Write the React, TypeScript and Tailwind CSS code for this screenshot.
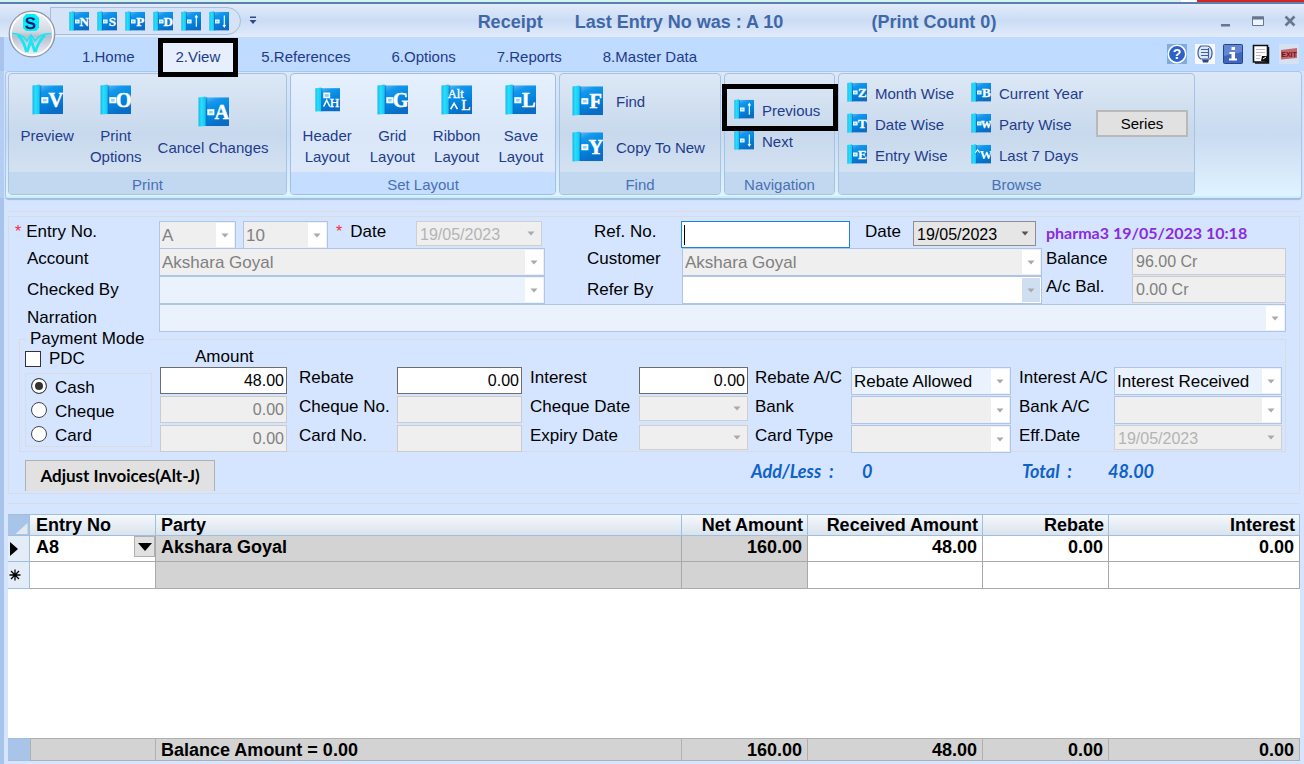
import React from "react";

const SANS = "font-['Liberation_Sans',Arial,sans-serif]";

function Book({ glyph, mark = "box", className }: { glyph?: string; mark?: "box" | "up" | "down" | "alt" | "header" | "caret"; className: string }) {
  return (
    <svg viewBox="0 0 32 32" className={`block shrink-0 ${className}`} aria-hidden="true">
      <defs>
        <linearGradient id="cover" x1="0" y1="0" x2="0.4" y2="1">
          <stop offset="0" stopColor="#5fbcf5" />
          <stop offset="0.25" stopColor="#1497ec" />
          <stop offset="0.65" stopColor="#0084e0" />
          <stop offset="1" stopColor="#0a6cc4" />
        </linearGradient>
        <linearGradient id="spine" x1="0" y1="0" x2="1" y2="0">
          <stop offset="0" stopColor="#1cb4ea" />
          <stop offset="0.4" stopColor="#25e0fb" />
          <stop offset="1" stopColor="#16c4f2" />
        </linearGradient>
      </defs>
      <rect x="7" y="1.5" width="25" height="29.5" fill="url(#cover)" />
      <path d="M0.5 1.5 L8 0.5 V31 L0.5 31.5 Z" fill="url(#spine)" />
      <path d="M8 1.5 h1.5 V31 H8 Z" fill="#0a6cc4" opacity=".6" />
      {(mark === "box" || mark === "up" || mark === "down") && (
        <rect x="10.5" y="14.5" width="5.5" height="4.500" fill="#8fd0fa" stroke="#fff" strokeWidth="1.8" />
      )}
      {mark === "box" && (
        <text x="24.5" y="23.500" textAnchor="middle" fontFamily="Liberation Serif, serif" fontWeight="bold" fontSize={glyph === "W" ? 17 : 21} fill="#fff" stroke="#fff" strokeWidth=".5">
          {glyph}
        </text>
      )}
      {mark === "up" && <path d="M24.5 25 V8 M22.5 10.500 L24.500 7.500 L26.500 10.500" stroke="#fff" strokeWidth="1.8" fill="none" />}
      {mark === "down" && <path d="M24.5 7 V25 M22.5 22.500 L24.500 25.500 L26.500 22.500" stroke="#fff" strokeWidth="1.8" fill="none" />}
      {mark === "alt" && (
        <g fontFamily="Liberation Serif, serif" fill="#fff" stroke="#fff" strokeWidth=".4">
          <text x="7" y="14" fontSize="13">Alt</text>
          <text x="21" y="27" fontSize="16">L</text>
          <path d="M10 26 L13.500 20 L17 26" strokeWidth="1.7" fill="none" />
        </g>
      )}
      {mark === "header" && (
        <g fontFamily="Liberation Serif, serif" fill="#fff">
          <rect x="11.500" y="8" width="7" height="5.500" fill="#8fd0fa" stroke="#fff" strokeWidth="1.8" />
          <text x="19" y="25" fontSize="17" stroke="#fff" strokeWidth=".5">H</text>
          <path d="M11 25 L15 17 L19 25" stroke="#fff" strokeWidth="1.9" fill="none" />
        </g>
      )}
      {mark === "caret" && (
        <g fontFamily="Liberation Serif, serif" fill="#fff">
          <path d="M7 14 L10.500 9 L14 14" stroke="#fff" strokeWidth="1.8" fill="none" />
          <text x="14" y="24" fontSize="20" fontWeight="bold">W</text>
        </g>
      )}
    </svg>
  );
}

function Group({ title, width, light, children }: { title: string; width: string; light?: boolean; children: React.ReactNode }) {
  const tone = light
    ? "from-[#e6f0fd] via-[#d9e7f9] to-[#dfeafa] border-[#9dbfe8]"
    : "from-[#dce8f5] via-[#c8d9ed] to-[#d9e7f5] border-[#a5c3e3]";
  return (
    <section className={`flex h-[122px] shrink-0 flex-col overflow-hidden rounded-[4px] border bg-linear-to-b ${tone} ${width}`}>
      <div className="flex-1">{children}</div>
      <h2 className={`h-[22px] pt-0.5 text-center text-[15px] leading-[22px] text-[#4a70b4] ${light ? "bg-[#c5deff]" : "bg-[#c1d8f0]"}`}>{title}</h2>
    </section>
  );
}

function BigButton({ icon, lines }: { icon: React.ReactNode; lines: string[] }) {
  return (
    <button className="flex flex-col items-center gap-2.5 leading-[21px]">
      <span className="flex h-[31px] items-center">{icon}</span>
      <span>
        {lines.map((l) => (
          <span key={l} className="block whitespace-nowrap">{l}</span>
        ))}
      </span>
    </button>
  );
}

function RowButton({ icon, label, gap = "gap-2" }: { icon: React.ReactNode; label: string; gap?: string }) {
  return (
    <button className={`flex items-center whitespace-nowrap leading-4 ${gap}`}>
      {icon}
      <span className="pt-[3px]">{label}</span>
    </button>
  );
}

function Arrow({ color = "#a9a9a9" }: { color?: string }) {
  return (
    <svg viewBox="0 0 8 5" className="h-[5px] w-2" aria-hidden="true">
      <path d="M0.500 0.500 H7.500 L4 4.500 Z" fill={color} />
    </svg>
  );
}

type Kind = "off" | "pale" | "white" | "date" | "dateOn";
const KIND: Record<Kind, { box: string; btn: string; text: string }> = {
  off: { box: "border-[#aec5e6] bg-[#efefef] h-7", btn: "bg-white", text: "text-[17px] text-[#808080] pl-0.5" },
  pale: { box: "border-[#aec5e6] bg-[#eaf2fd] h-7", btn: "bg-white", text: "text-[17px] text-black pl-0.5" },
  white: { box: "border-[#aec5e6] bg-white h-7", btn: "bg-[#cfdff0]", text: "text-[17px] text-black pl-0.5" },
  date: { box: "border-[#cfcfcf] bg-[#efefef] h-[25px]", btn: "", text: "text-[16px] text-[#b4b4b4] pl-[3px]" },
  dateOn: { box: "border-[#8e8e8e] bg-[#e6e6e6] h-[25px]", btn: "", text: "text-[16px] text-black pl-[3px]" },
};

function Combo({ id, value = "", kind, label, className = "" }: { id: string; value?: string; kind: Kind; label?: string; className?: string }) {
  const k = KIND[kind];
  return (
    <div className={`relative min-w-0 border ${k.box} ${className}`}>
      <select id={id} aria-label={label} defaultValue={value} className={`block h-full w-full appearance-none bg-transparent pt-px outline-none ${k.text}`}>
        <option value={value}>{value}</option>
      </select>
      <span className={`pointer-events-none absolute inset-y-px right-px flex w-[18px] items-center justify-center ${k.btn}`}>
        <Arrow color={kind === "dateOn" ? "#555" : "#a9a9a9"} />
      </span>
    </div>
  );
}

function Field({ id, value = "", on, right, label }: { id: string; value?: string; on?: boolean; right?: boolean; label?: string }) {
  return (
    <input
      id={id}
      aria-label={label}
      defaultValue={value}
      readOnly={!on}
      className={`block h-[27px] w-full min-w-0 border pt-px text-[16px] outline-none ${right ? "pr-0.5 text-right" : "px-[3px]"} ${
        on ? "border-[#6d6d6d] bg-white text-black" : "border-[#cbcbcb] bg-[#efefef] text-[#808080]"
      }`}
    />
  );
}

function Label({ htmlFor, children, className = "" }: { htmlFor: string; children: React.ReactNode; className?: string }) {
  return (
    <label htmlFor={htmlFor} className={`whitespace-nowrap text-[17px] leading-[22px] ${className}`}>
      {children}
    </label>
  );
}

function Orb() {
  return (
    <svg viewBox="0 0 48 48" className="absolute left-2 top-2.5 z-10 size-12" role="img" aria-label="Application menu">
      <defs>
        <linearGradient id="orb" x1="0" y1="0" x2="0" y2="1">
          <stop offset="0" stopColor="#f4f6fa" />
          <stop offset="0.45" stopColor="#d3d8e2" />
          <stop offset="0.55" stopColor="#b6becf" />
          <stop offset="1" stopColor="#f2f5fb" />
        </linearGradient>
      </defs>
      <circle cx="24" cy="24" r="22.800" fill="url(#orb)" stroke="#8d97a8" strokeWidth="1.200" />
      <circle cx="24" cy="24" r="21" fill="none" stroke="#fff" strokeWidth="1.500" />
      <path d="M18 4 h9 l4 4 v10 l-3 3 h-10 l-3 -3 v-10 Z" fill="#00f0fa" />
      <text x="22.500" y="19" textAnchor="middle" fontFamily="Liberation Sans, sans-serif" fontWeight="bold" fontSize="17" textRendering="geometricPrecision" fill="#0b1a78">S</text>
      <path d="M4 23.500 C11 23.500 16 26 19 31 L23 25 L27 31 C30 26 35 23.500 43 23.500" fill="none" stroke="#19e6f2" strokeWidth="1.600" />
      <path d="M10 25 C14 29 17 35 18.500 42 M19 42 L23 30 L27 42 M27.500 42 C29 35 33 29 37 25" fill="none" stroke="#19e6f2" strokeWidth="2.800" />
    </svg>
  );
}

function TopIcons() {
  return (
    <div className="flex items-center gap-2">
      <button aria-label="Help">
        <svg viewBox="0 0 20 20" className="block size-5">
          <rect width="20" height="20" fill="#7fabdf" />
          <circle cx="10" cy="10" r="8.700" fill="#2c62c8" stroke="#fff" strokeWidth="1.500" />
          <text x="10" y="15" textAnchor="middle" fontFamily="Liberation Sans, sans-serif" fontWeight="bold" fontSize="14" fill="#fff">?</text>
        </svg>
      </button>
      <button aria-label="Scroll">
        <svg viewBox="0 0 20 20" className="block size-5">
          <rect width="20" height="20" fill="#f7f9fd" />
          <path d="M6 2 H13 C18 4 18 12 15 15 H6 C2 13 2 5 6 2 Z" fill="#dde9fa" stroke="#3c5f9e" strokeWidth="1.200" />
          <path d="M6 5.500 h7 M6 8.500 h8 M6 11.500 h7 M13.500 4 v10" stroke="#3c5f9e" strokeWidth="1.200" />
          <path d="M7 15.500 h7 l-1 3 h-5 Z" fill="#2c4a86" />
        </svg>
      </button>
      <button aria-label="Information">
        <svg viewBox="0 0 20 20" className="block size-5">
          <rect x="0.500" y="0.500" width="19" height="19" rx="1" fill="#3f66bd" stroke="#27458c" />
          <path d="M1 1 H19 V8 L1 12 Z" fill="#7b9ce0" opacity=".6" />
          <path d="M8.500 3 h3.500 v3 h-3.500 Z M6.500 8 h5.500 v6.500 h2 v2 h-8 v-2 h2.500 v-4.500 h-2 Z" fill="#fff" />
        </svg>
      </button>
      <button aria-label="Notes">
        <svg viewBox="0 0 20 20" className="block size-5">
          <path d="M2.500 1.500 H16.500 V18 H2.500 Z" fill="#fff" stroke="#111" strokeWidth="1.600" />
          <path d="M17.500 3 V19 H4" fill="none" stroke="#111" strokeWidth="1.500" />
          <path d="M5 5.500 h9 M5 8.500 h9 M5 11.500 h5 M5 14.500 h4" stroke="#b9bcc4" strokeWidth="1.200" />
          <path d="M10 17 L11 12 H16 V18 Z" fill="#111" />
          <path d="M12 15 l3 -2" stroke="#fff" />
        </svg>
      </button>
      <button aria-label="Exit">
        <svg viewBox="0 0 20 20" className="block size-5">
          <rect width="20" height="20" fill="#d5e2f4" />
          <path d="M2 6 L18 4 V14 L2 15.500 Z" fill="#c4686c" />
          <text x="10" y="13" textAnchor="middle" fontFamily="Liberation Sans, sans-serif" fontWeight="bold" fontSize="7" fill="#6e1116">EXIT</text>
        </svg>
      </button>
    </div>
  );
}

const TABS = ["1.Home", "2.View", "5.References", "6.Options", "7.Reports", "8.Master Data"];

function Header() {
  return (
    <header className="relative">
      <div className="flex h-0.5 bg-[#d3f3ee]">
        <span className="ml-auto w-4 bg-white" />
        <span className="w-[107px] bg-[#d3241f]" />
      </div>
      <Orb />
      <div className="relative flex h-[35px] items-center border-t-2 border-[#5b7fae] bg-linear-to-b from-[#e2ebfa] via-[#cbdcf5] to-[#e2ecfb]">
        <div className="ml-[50px] flex h-7 w-[191px] items-center gap-2 rounded-r-full border border-[#a5bde0] bg-[#d6e3f6] pl-[18px]">
          <Book glyph="N" className="size-5" />
          <Book glyph="S" className="size-5" />
          <Book glyph="P" className="size-5" />
          <Book glyph="D" className="size-5" />
          <Book mark="up" className="size-5" />
          <Book mark="down" className="size-5" />
        </div>
        <svg viewBox="0 0 8 9" className="ml-2 h-[9px] w-2" aria-hidden="true">
          <path d="M1 0.500 h6 v1.500 h-6 Z M0.500 4 H7.500 L4 8 Z" fill="#2b4a86" />
        </svg>
        <h1 className="pointer-events-none absolute inset-x-0 flex justify-center gap-8 pl-[170px] pt-0.5 text-[18px] font-bold leading-5 text-[#3f68a8]">
          <span>Receipt</span>
          <span>Last Entry No was : A 10</span>
          <span className="pl-14">(Print Count 0)</span>
        </h1>
        <div className="ml-auto flex items-center gap-5 pr-2">
          <button aria-label="Minimize">
            <svg viewBox="0 0 12 12" className="block size-3"><path d="M1 9 h9 v2.500 h-9 Z" fill="#66778f" /></svg>
          </button>
          <button aria-label="Restore">
            <svg viewBox="0 0 12 12" className="block size-3"><path d="M0.500 2 h11 v8.500 h-11 Z" fill="#eef4fd" stroke="#66778f" /><path d="M0 1.500 h12 v3 h-12 Z" fill="#66778f" /></svg>
          </button>
          <button aria-label="Close">
            <svg viewBox="0 0 12 12" className="block size-3"><path d="M1.500 1.500 L10.500 10.500 M10.500 1.500 L1.500 10.500" stroke="#66778f" strokeWidth="2.600" /></svg>
          </button>
        </div>
      </div>
      <div className="flex h-[34px] items-center justify-between border-l-4 border-[#a9c4ec] bg-[#bfdbff] pl-[78px] pr-[5px] text-[15px] text-[#1f3c8c]">
        <nav className="flex h-full gap-[41px]">
          {TABS.map((t) => (
            <button key={t} className="relative whitespace-nowrap pt-1.5">
              {t === "2.View" && (
                <span className="absolute -inset-x-[18px] top-[1px] z-10 h-[39px] border-[5px] border-black bg-[#e6effb]" />
              )}
              <span className="relative z-20">{t}</span>
            </button>
          ))}
        </nav>
        <TopIcons />
      </div>
    </header>
  );
}

function Ribbon() {
  const big = "size-[31px]";
  return (
    <div className="border-l-4 border-[#b4cdf2] pl-px pr-0.5">
      <div className="flex h-[127px] gap-[3px] rounded-[4px] border border-b-2 border-[#a9c6ee] border-b-[#c8f0fa] bg-linear-to-b from-[#dce8f6] via-[#c9dbf0] to-[#e0f3ff] px-0.5 pt-px text-[15px] text-[#1f3c8c] shadow-[0_2px_1px_#a3bbdc]">
        <Group title="Print" width="w-[279px]">
          <div className="flex items-start justify-center gap-4 pr-1.5 pt-2.5">
            <BigButton icon={<Book glyph="V" className={big} />} lines={["Preview"]} />
            <BigButton icon={<Book glyph="O" className={big} />} lines={["Print", "Options"]} />
            <div className="pt-3">
              <BigButton icon={<Book glyph="A" className={big} />} lines={["Cancel Changes"]} />
            </div>
          </div>
        </Group>
        <Group title="Set Layout" width="w-[266px]" light>
          <div className="flex items-start justify-center gap-[18px] pt-2.5">
            <BigButton icon={<Book mark="header" className="size-[25px]" />} lines={["Header", "Layout"]} />
            <BigButton icon={<Book glyph="G" className={big} />} lines={["Grid", "Layout"]} />
            <BigButton icon={<Book mark="alt" className={big} />} lines={["Ribbon", "Layout"]} />
            <BigButton icon={<Book glyph="L" className={big} />} lines={["Save", "Layout"]} />
          </div>
        </Group>
        <Group title="Find" width="w-[162px]">
          <div className="flex flex-col items-start gap-[15px] pl-3 pt-[11px]">
            <RowButton gap="gap-[13px]" icon={<Book glyph="F" className={big} />} label="Find" />
            <RowButton gap="gap-[13px]" icon={<Book glyph="Y" className={big} />} label="Copy To New" />
          </div>
        </Group>
        <div className="relative shrink-0">
          <Group title="Navigation" width="w-[111px]">
            <div className="flex flex-col items-start gap-[11px] pl-[9px] pt-[25px]">
              <RowButton icon={<Book mark="up" className="size-5" />} label="Previous" />
              <RowButton icon={<Book mark="down" className="size-5" />} label="Next" />
            </div>
          </Group>
          <span className="pointer-events-none absolute -left-0.5 -right-[3px] top-[11px] z-10 h-[47px] border-[5px] border-black" />
        </div>
        <Group title="Browse" width="w-[357px]">
          <div className="flex pl-2 pt-2">
            <div className="flex w-[124px] flex-col items-start gap-[11px]">
              <RowButton icon={<Book glyph="Z" className="size-5" />} label="Month Wise" />
              <RowButton icon={<Book glyph="T" className="size-5" />} label="Date Wise" />
              <RowButton icon={<Book glyph="E" className="size-5" />} label="Entry Wise" />
            </div>
            <div className="flex w-[125px] flex-col items-start gap-[11px]">
              <RowButton icon={<Book glyph="B" className="size-5" />} label="Current Year" />
              <RowButton icon={<Book glyph="W" className="size-5" />} label="Party Wise" />
              <RowButton icon={<Book mark="caret" className="size-5" />} label="Last 7 Days" />
            </div>
            <button className="h-[27px] w-[92px] self-center border-2 border-[#b9b9b9] bg-[#e1e1e1] pt-0.5 leading-5 text-black">Series</button>
          </div>
        </Group>
      </div>
    </div>
  );
}

const star = <span className="text-[16px] text-red-500">*</span>;

function Details() {
  return (
    <div className="flex flex-col pl-1.5 pr-[13px]">
      <div className="grid h-[27px] grid-cols-[144fr_77fr_7fr_85fr_88fr_126fr_139fr_169fr_63fr_123fr_250fr]">
        <Label htmlFor="entry" className="flex gap-[5px]">{star}Entry No.</Label>
        <Combo id="entry" value="A" kind="off" />
        <span />
        <Combo id="entryNo" value="10" kind="off" label="Entry number" />
        <Label htmlFor="date" className="flex gap-2 pl-2">{star}Date</Label>
        <Combo id="date" value="19/05/2023" kind="date" />
        <Label htmlFor="ref" className="pl-[52px]">Ref. No.</Label>
        <div className="relative min-w-0">
          <input id="ref" className="block h-[27px] w-full border border-[#1c83d8] bg-white px-[3px] text-[17px] outline-none" />
          <span className="pointer-events-none absolute inset-y-1 left-[3px] w-px bg-black" />
        </div>
        <Label htmlFor="refDate" className="pl-[15px]">Date</Label>
        <Combo id="refDate" value="19/05/2023" kind="dateOn" />
        <strong className="whitespace-nowrap pl-2.5 font-['Lato',sans-serif] text-[16px] leading-6 text-[#8a2be2]">pharma3 19/05/2023 10:18</strong>
      </div>
      <div className="grid grid-cols-[144fr_386fr_137fr_360fr_90fr_154fr] grid-rows-[28px_28px]">
        <Label htmlFor="account" className="pl-3">Account</Label>
        <Combo id="account" value="Akshara Goyal" kind="off" />
        <Label htmlFor="customer" className="pl-[42px]">Customer</Label>
        <Combo id="customer" value="Akshara Goyal" kind="off" />
        <Label htmlFor="balance" className="pl-1">Balance</Label>
        <Field id="balance" value="96.00 Cr" />
        <Label htmlFor="checked" className="self-center pl-3">Checked By</Label>
        <Combo id="checked" kind="pale" />
        <Label htmlFor="refer" className="self-center pl-[42px]">Refer By</Label>
        <Combo id="refer" kind="white" />
        <Label htmlFor="acbal" className="pl-1">A/c Bal.</Label>
        <Field id="acbal" value="0.00 Cr" />
      </div>
      <div className="grid grid-cols-[144fr_1127fr]">
        <Label htmlFor="narration" className="self-center pl-3">Narration</Label>
        <Combo id="narration" kind="pale" />
      </div>
    </div>
  );
}

function Radio({ label, checked }: { label: string; checked?: boolean }) {
  return (
    <label className="flex h-6 items-center gap-2 pl-[5px] text-[17px] leading-4">
      <input
        type="radio"
        name="mode"
        defaultChecked={checked}
        className="size-4 appearance-none rounded-full border border-[#444] bg-white checked:bg-[#333] checked:shadow-[inset_0_0_0_3px_#fff]"
      />
      <span className="pt-[3px]">{label}</span>
    </label>
  );
}

function Payment() {
  return (
    <fieldset className="ml-2.5 mr-[13px] min-w-0 border border-[#d9dbe0]">
      <legend className="ml-1.5 px-1 text-[17px] leading-3.5">Payment Mode</legend>
      <div className="grid grid-cols-[140fr_127fr_110fr_125fr_117fr_109fr_103fr_160fr_103fr_168fr_3fr] grid-rows-[21px_29px_29px_26px]">
        <div className="row-span-4 pl-[5px] pr-2">
          <label className="mb-px flex h-[26px] items-center gap-2 text-[17px]">
            <input type="checkbox" className="size-4 appearance-none border border-[#333] bg-white checked:bg-[#333]" />
            PDC
          </label>
          <div className="border border-[#d9dbe0]">
            <Radio label="Cash" checked />
            <Radio label="Cheque" />
            <Radio label="Card" />
          </div>
        </div>
        <Label htmlFor="amount" className="col-span-10 pl-[35px] leading-3.5">Amount</Label>

        <Field id="amount" value="48.00" on right />
        <Label htmlFor="rebate" className="pl-3">Rebate</Label>
        <Field id="rebate" value="0.00" on right />
        <Label htmlFor="interest" className="pl-2">Interest</Label>
        <Field id="interest" value="0.00" on right />
        <Label htmlFor="rebateAc" className="pl-[7px]">Rebate A/C</Label>
        <Combo id="rebateAc" value="Rebate Allowed" kind="pale" />
        <Label htmlFor="interestAc" className="pl-2">Interest A/C</Label>
        <Combo id="interestAc" value="Interest Received" kind="pale" />
        <span />

        <Field id="chequeAmt" value="0.00" right label="Cheque amount" />
        <Label htmlFor="chequeNo" className="pl-3">Cheque No.</Label>
        <Field id="chequeNo" />
        <Label htmlFor="chequeDate" className="pl-2">Cheque Date</Label>
        <Combo id="chequeDate" kind="date" />
        <Label htmlFor="bank" className="pl-[7px]">Bank</Label>
        <Combo id="bank" kind="off" />
        <Label htmlFor="bankAc" className="pl-2">Bank A/C</Label>
        <Combo id="bankAc" kind="off" />
        <span />

        <Field id="cardAmt" value="0.00" right label="Card amount" />
        <Label htmlFor="cardNo" className="pl-3">Card No.</Label>
        <Field id="cardNo" />
        <Label htmlFor="expiry" className="pl-2">Expiry Date</Label>
        <Combo id="expiry" kind="date" />
        <Label htmlFor="cardType" className="pl-[7px]">Card Type</Label>
        <Combo id="cardType" kind="off" />
        <Label htmlFor="effDate" className="pl-2">Eff.Date</Label>
        <Combo id="effDate" value="19/05/2023" kind="date" />
        <span />
      </div>
    </fieldset>
  );
}

const COLS = ["Party", "Net Amount", "Received Amount", "Rebate", "Interest"];
const NUMS = ["160.00", "48.00", "0.00", "0.00"];

function Grid() {
  const line = "border-r border-b border-[#a9a9a9]";
  return (
    <table className="w-full table-fixed border-separate border-spacing-0 border-t border-[#9dbfe0] bg-white text-[18px] font-bold leading-5">
      <colgroup>
        <col className="w-[22px]" />
        <col className="w-[126px]" />
        <col />
        <col className="w-[126px]" />
        <col className="w-[175px]" />
        <col className="w-[126px]" />
        <col className="w-[191px]" />
      </colgroup>
      <thead>
        <tr className="h-[21px] bg-linear-to-b from-[#f6f9fc] to-[#d8e1ec]">
          <th className="border-b border-r border-[#9dbfe0] bg-[#a9c4e9]" aria-label="Row">
            <svg viewBox="0 0 20 20" className="block h-5 w-full" aria-hidden="true">
              <path d="M19 8 V19 H7 Z" fill="#e4e9f0" />
            </svg>
          </th>
          <th className="border-b border-r border-[#9dbfe0] pl-1.5 text-left">Entry No</th>
          {COLS.map((c, i) => (
            <th key={c} className={`border-b border-r border-[#9dbfe0] ${i === 0 ? "pl-[5px] text-left" : "pr-1 text-right"}`}>{c}</th>
          ))}
        </tr>
      </thead>
      <tbody>
        <tr className="h-[26px]">
          <td className="border-b border-r border-[#9dbfe0] bg-[#e4edf7]">
            <svg viewBox="0 0 8 14" className="ml-0.5 h-3.5 w-2" aria-hidden="true"><path d="M0 0 L8 7 L0 14 Z" fill="#000" /></svg>
          </td>
          <td className={`${line} pl-1.5 align-top`}>
            <div className="flex items-start justify-between">
              <span className="pt-px">A8</span>
              <button aria-label="Choose entry" className="flex h-[21px] w-[21px] items-center justify-center border border-[#b0b0b0] bg-[#e1e1e1]">
                <svg viewBox="0 0 14 8" className="h-2 w-3.5" aria-hidden="true"><path d="M0 0 H14 L7 8 Z" fill="#000" /></svg>
              </button>
            </div>
          </td>
          <td className={`${line} bg-[#d3d3d3] pl-[5px] pt-px align-top`}>Akshara Goyal</td>
          {NUMS.map((n, i) => (
            <td key={i} className={`${line} pr-[5px] pt-px text-right align-top ${i === 0 ? "bg-[#d3d3d3]" : ""}`}>{n}</td>
          ))}
        </tr>
        <tr className="h-[27px]">
          <td className="border-b border-r border-[#9dbfe0] bg-[#e4edf7]">
            <svg viewBox="0 0 12 12" className="ml-px size-3" aria-hidden="true"><path d="M6 0.500 V11.500 M0.500 6 H11.500 M2 2 L10 10 M10 2 L2 10" stroke="#000" strokeWidth="1.300" /></svg>
          </td>
          <td className={line} />
          <td className={`${line} bg-[#d3d3d3]`} />
          <td className={`${line} bg-[#d3d3d3]`} />
          <td className={line} />
          <td className={line} />
          <td className={line} />
        </tr>
        <tr className="h-[149px]">
          <td colSpan={7} />
        </tr>
      </tbody>
      <tfoot>
        <tr className="h-[23px] bg-[#d3d3d3]">
          <td className="border-y border-[#9dbfe0] bg-[#a9c4e9]" />
          <td className="border border-[#b0b0b0]" />
          <td className="border-y border-r border-[#b0b0b0] pl-[5px]">Balance Amount = 0.00</td>
          {NUMS.map((n, i) => (
            <td key={i} className="border-y border-r border-[#b0b0b0] pr-[5px] text-right">{n}</td>
          ))}
        </tr>
      </tfoot>
    </table>
  );
}

export default function App() {
  return (
    <div className={`flex min-h-screen flex-col overflow-x-hidden bg-[#d5e5ff] text-black ${SANS}`}>
      <Header />
      <Ribbon />
      <main className="flex-1 border-l-4 border-[#a9c4ec] pl-1 pr-1 pt-[13px]">
        <div className="border-t border-[#d9dbe0] pt-1">
          <section className="border border-[#d9dbe0] pt-1">
            <Details />
            <Payment />
            <div className="mt-2 flex items-start pb-0.5 pl-4">
              <button className="h-[31px] w-[190px] whitespace-nowrap border border-b-0 border-[#b0b0b0] bg-[#e1e1e1] font-['Lato',sans-serif] text-[17px] font-bold">
                Adjust Invoices(Alt-J)
              </button>
              <div className="ml-auto grid w-[548px] grid-cols-[111px_160px_86px_1fr] font-['Lato',sans-serif] text-[18px] font-bold italic leading-[22px] text-[#0f62c8]">
                <span>Add/Less&nbsp; :</span>
                <span>0</span>
                <span>Total&nbsp; :</span>
                <span>48.00</span>
              </div>
            </div>
          </section>
          <div className="mt-[9px] border-t border-[#d9dbe0] pt-2.5">
            <Grid />
          </div>
        </div>
      </main>
    </div>
  );
}
